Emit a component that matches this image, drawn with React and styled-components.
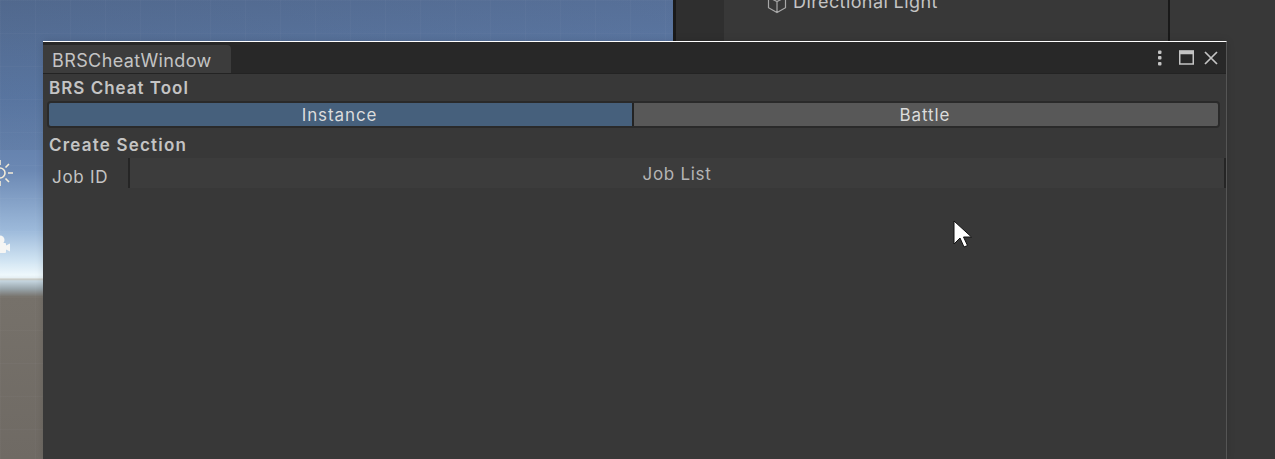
import React from "react";
import styled, { createGlobalStyle } from "styled-components";

const GlobalStyle = createGlobalStyle`
  html, body {
    margin: 0;
    padding: 0;
    height: 459px;
    overflow: hidden;
    background: #383838;
    font-family: Inter, "Liberation Sans", sans-serif;
  }
  * { box-sizing: border-box; }
`;

function SunIcon() {
  return (
    <svg width="26" height="26" viewBox="0 0 26 26" fill="none" stroke="#f4ecd8" strokeWidth="1.6">
      <circle cx="13" cy="13" r="5" />
      <path d="M13 0v5M13 21v5M0 13h5M21 13h5M4 4l3.500 3.500M18.500 18.500L22 22M4 22l3.500-3.500M18.500 7.500L22 4" />
    </svg>
  );
}

function CameraIcon() {
  return (
    <svg width="16" height="21" viewBox="0 0 16 21" fill="#f6f6f4">
      <circle cx="5" cy="5" r="4.500" />
      <rect x="1" y="8" width="10" height="10" rx="1" />
      <path d="M10 11l5-2.500v8L10 14z" />
    </svg>
  );
}

function CubeIcon() {
  return (
    <svg width="22" height="22" viewBox="0 0 22 22" fill="none" stroke="#a8a8a8" strokeWidth="1.2">
      <path d="M11 1.500l8.500 3.800v10.400L11 20.500l-8.500-4.800V5.300zM2.500 5.300L11 9.500l8.500-4.200M11 9.500v11" />
    </svg>
  );
}

function KebabIcon() {
  return (
    <svg width="6" height="16" viewBox="0 0 6 16" fill="#c4c4c4">
      <rect x="1" y="0.500" width="3.500" height="3.500" rx="1" />
      <rect x="1" y="6" width="3.500" height="3.500" rx="1" />
      <rect x="1" y="12" width="3.500" height="3.500" rx="1" />
    </svg>
  );
}

function MaximizeIcon() {
  return (
    <svg width="15" height="15" viewBox="0 0 15 15" fill="none" stroke="#c4c4c4">
      <rect x="0.750" y="1" width="13.500" height="13" strokeWidth="1.500" />
      <path d="M0 2.500h15" strokeWidth="3.500" />
    </svg>
  );
}

function CloseIcon() {
  return (
    <svg width="14" height="14" viewBox="0 0 14 14" fill="none" stroke="#c4c4c4" strokeWidth="1.700">
      <path d="M1 1l12 12M13 1L1 13" />
    </svg>
  );
}

function CursorIcon() {
  return (
    <svg width="20" height="28" viewBox="0 0 20 28">
      <path d="M1 1v23l6-6 4 9 3.500-1.500-4-8.500h8z" fill="#fff" stroke="#111" strokeWidth="1" />
    </svg>
  );
}

export default function App() {
  return (
    <Page>
      <GlobalStyle />
      <Editor>
        <SceneView>
          <SunSlot><SunIcon /></SunSlot>
          <CameraSlot><CameraIcon /></CameraSlot>
        </SceneView>
        <Gutter />
        <Hierarchy>
          <HierarchyRow>
            <CubeIcon />
            <HierarchyLabel>Directional Light</HierarchyLabel>
          </HierarchyRow>
        </Hierarchy>
        <Inspector />
      </Editor>
      <FloatingWindow>
        <TabBar>
          <Tab>BRSCheatWindow</Tab>
          <WindowActions>
            <KebabSlot><KebabIcon /></KebabSlot>
            <MaximizeIcon />
            <CloseIcon />
          </WindowActions>
        </TabBar>
        <Body>
          <SectionLabel>BRS Cheat Tool</SectionLabel>
          <Toolbar>
            <ToolbarButton $active>Instance</ToolbarButton>
            <ToolbarButton>Battle</ToolbarButton>
          </Toolbar>
          <SectionLabel $second>Create Section</SectionLabel>
          <TableHeader>
            <IdColumn>Job ID</IdColumn>
            <ListColumn>Job List</ListColumn>
          </TableHeader>
        </Body>
      </FloatingWindow>
      <CursorSlot><CursorIcon /></CursorSlot>
    </Page>
  );
}

const Page = styled.div`
  position: relative;
  width: 1275px;
  height: 459px;
  overflow: hidden;
`;

const Editor = styled.div`
  display: flex;
  height: 100%;
`;

const SceneView = styled.div`
  position: relative;
  width: 673px;
  background-image:
    repeating-linear-gradient(to right, rgba(255, 255, 255, 0.025) 0 1px, transparent 1px 35px),
    repeating-linear-gradient(to bottom, rgba(255, 255, 255, 0.025) 0 1px, transparent 1px 33px),
    linear-gradient(to right, rgba(80, 100, 130, 0.15), rgba(110, 140, 190, 0.2)),
    linear-gradient(
      to bottom,
      #51698f 0,
      #5a78a5 100px,
      #6b88b3 170px,
      #9cb9da 230px,
      #cfe3f2 260px,
      #eef8fc 275px,
      #e4eef2 278px,
      #c8c8c0 279px,
      #c4d4de 281px,
      #98a4aa 289px,
      #76716a 297px,
      #6f6a64 459px
    );
  background-size: auto, auto, 100% 150px, auto;
  background-repeat: repeat, repeat, no-repeat, no-repeat;
`;

const SunSlot = styled.div`
  position: absolute;
  left: -13px;
  top: 160px;
`;

const CameraSlot = styled.div`
  position: absolute;
  left: -5px;
  top: 235px;
`;

const Gutter = styled.div`
  width: 51px;
  background: #2f2f2f;
  border-left: 3px solid #1a1a1a;
`;

const Hierarchy = styled.div`
  width: 446px;
  background: #383838;
  border-right: 2px solid #191919;
`;

const HierarchyRow = styled.div`
  display: flex;
  align-items: center;
  gap: 5px;
  margin: -8px 0 0 42px;
  height: 22px;
  color: #c4c4c4;
  font-size: 18px;
  letter-spacing: 0.4px;
`;

const HierarchyLabel = styled.span`
  margin-bottom: 4px;
`;

const Inspector = styled.div`
  flex: 1;
  background: #383838;
`;

const FloatingWindow = styled.div`
  position: absolute;
  left: 43px;
  top: 41px;
  width: 1184px;
  height: 418px;
  display: flex;
  flex-direction: column;
  background: #383838;
  border-top: 1px solid #fff;
  border-right: 1px solid #555;
  box-shadow: 0 0 8px rgba(0, 0, 0, 0.12);
`;

const TabBar = styled.div`
  display: flex;
  justify-content: space-between;
  align-items: flex-end;
  height: 32px;
  background: #282828;
  border-bottom: 1px solid #232323;
`;

const Tab = styled.div`
  display: flex;
  align-items: center;
  width: 188px;
  height: 28px;
  padding: 2px 0 0 9px;
  background: #3c3c3c;
  border-top-right-radius: 4px;
  color: #c4c4c4;
  font-size: 18px;
  letter-spacing: 0.4px;
`;

const WindowActions = styled.div`
  align-self: center;
  display: flex;
  align-items: center;
  gap: 10px;
  padding-right: 8px;
`;

const KebabSlot = styled.div`
  display: flex;
  margin-right: 6px;
`;

const Body = styled.div`
  display: flex;
  flex-direction: column;
  flex: 1;
`;

const SectionLabel = styled.div`
  height: 27px;
  line-height: 28px;
  margin-top: ${(props) => (props.$second ? "3px" : "0")};
  padding-left: 6px;
  color: #c4c4c4;
  font-size: 17px;
  font-weight: 600;
  letter-spacing: ${(props) => (props.$second ? "1.2px" : "1px")};
`;

const Toolbar = styled.div`
  display: grid;
  grid-template-columns: 585px 1fr;
  width: 1173px;
  height: 27px;
  margin-left: 4px;
  overflow: hidden;
  border: 2px solid #2a2a2a;
  border-radius: 4px;
`;

const ToolbarButton = styled.div`
  display: flex;
  align-items: center;
  justify-content: center;
  padding-right: 2px;
  background: ${(props) => (props.$active ? "#46607c" : "#585858")};
  border-right: ${(props) => (props.$active ? "2px solid #232323" : "none")};
  color: #dcdcdc;
  font-size: 17px;
  letter-spacing: 0.9px;
`;

const TableHeader = styled.div`
  display: flex;
  height: 30px;
  background: #3c3c3c;
  color: #c4c4c4;
  font-size: 17px;
  letter-spacing: 0.7px;
`;

const IdColumn = styled.div`
  width: 87px;
  padding: 9px 0 0 9px;
  background: #383838;
  border-right: 2px solid #252525;
`;

const ListColumn = styled.div`
  flex: 1;
  padding-top: 6px;
  text-align: center;
  color: #b4b4b4;
  border-right: 2px solid #252525;
`;

const CursorSlot = styled.div`
  position: absolute;
  left: 953px;
  top: 220px;
`;
